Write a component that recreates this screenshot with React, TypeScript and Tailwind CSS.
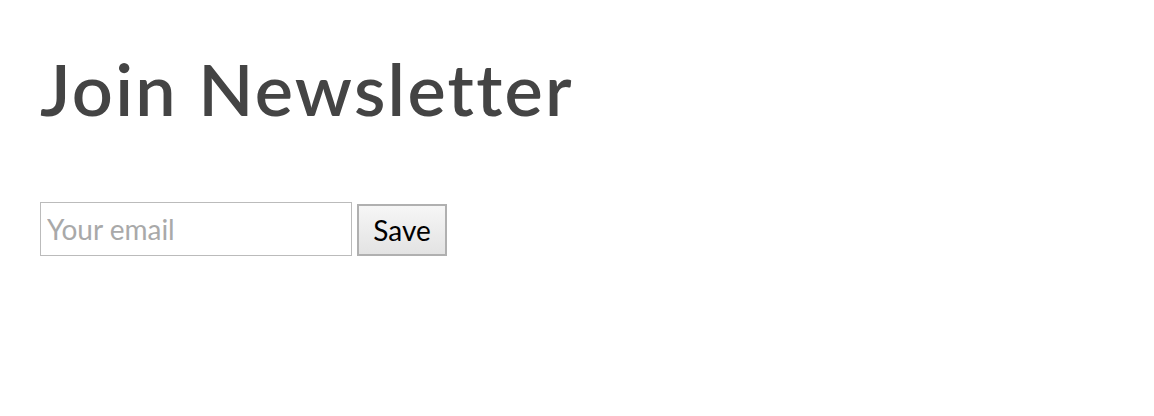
import React from "react";

export default function App() {
  return (
    <div className="w-[1154px] h-[416px] bg-white pl-[40px] pt-[40px] font-['Lato',sans-serif]">
      <h1 className="text-[72px] leading-[96px] text-[#444444] font-semibold tracking-[2.3px] m-0 font-['Lato',sans-serif]">
        Join Newsletter
      </h1>
      <div className="flex items-end mt-[66px]">
        <input
          type="email"
          placeholder="Your email"
          className="w-[312px] h-[54px] border border-[#bbbbbb] px-[6px] text-[28px] text-black placeholder:text-[#a9a9a9] outline-none font-['Lato',sans-serif]"
        />
        <button className="ml-[5px] w-[90px] h-[52px] border-2 border-[#b0b0b0] bg-gradient-to-b from-[#f6f6f6] to-[#e3e3e3] text-[28px] text-black font-['Lato',sans-serif]">
          Save
        </button>
      </div>
    </div>
  );
}
